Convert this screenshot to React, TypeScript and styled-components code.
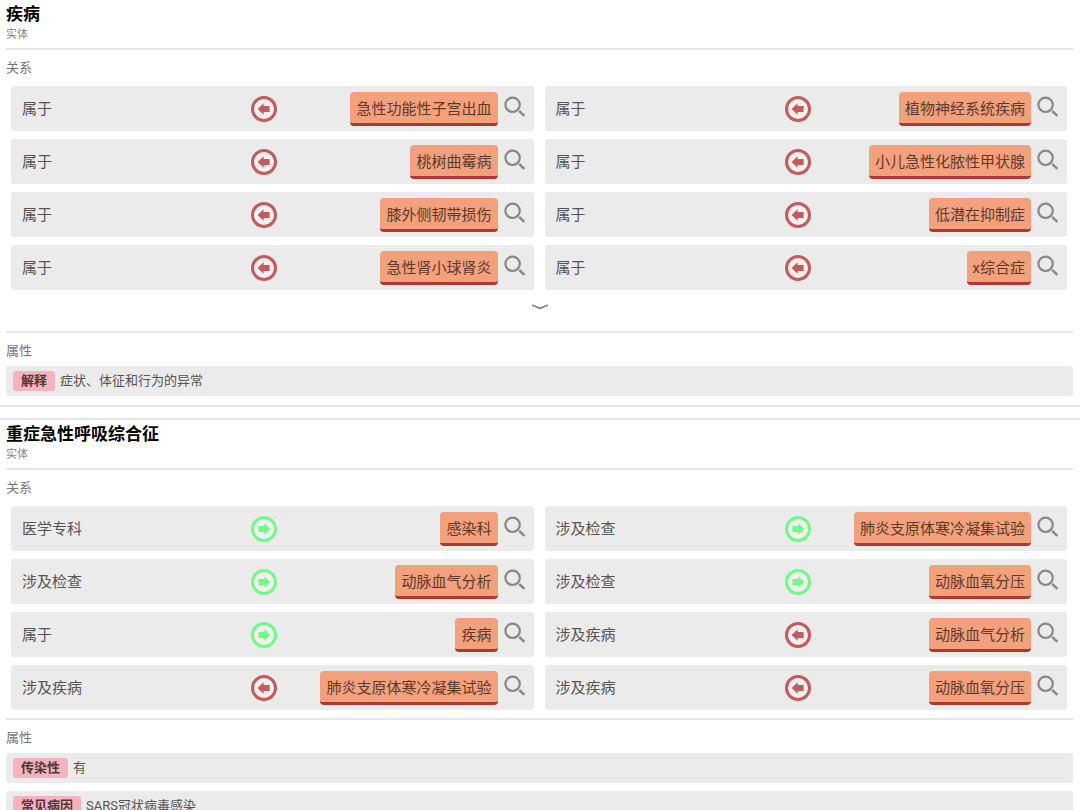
import React from "react";
import styled, { createGlobalStyle } from "styled-components";

type Direction = "in" | "out";

interface Relation {
  name: string;
  direction: Direction;
  target: string;
}

interface Attribute {
  name: string;
  value: string;
}

interface Entity {
  title: string;
  relations: Relation[];
  hasMore: boolean;
  attributes: Attribute[];
}

const entities: Entity[] = [
  {
    title: "疾病",
    hasMore: true,
    relations: [
      { name: "属于", direction: "in", target: "急性功能性子宫出血" },
      { name: "属于", direction: "in", target: "植物神经系统疾病" },
      { name: "属于", direction: "in", target: "桃树曲霉病" },
      { name: "属于", direction: "in", target: "小儿急性化脓性甲状腺" },
      { name: "属于", direction: "in", target: "膝外侧韧带损伤" },
      { name: "属于", direction: "in", target: "低潜在抑制症" },
      { name: "属于", direction: "in", target: "急性肾小球肾炎" },
      { name: "属于", direction: "in", target: "x综合症" },
    ],
    attributes: [{ name: "解释", value: "症状、体征和行为的异常" }],
  },
  {
    title: "重症急性呼吸综合征",
    hasMore: false,
    relations: [
      { name: "医学专科", direction: "out", target: "感染科" },
      { name: "涉及检查", direction: "out", target: "肺炎支原体寒冷凝集试验" },
      { name: "涉及检查", direction: "out", target: "动脉血气分析" },
      { name: "涉及检查", direction: "out", target: "动脉血氧分压" },
      { name: "属于", direction: "out", target: "疾病" },
      { name: "涉及疾病", direction: "in", target: "动脉血气分析" },
      { name: "涉及疾病", direction: "in", target: "肺炎支原体寒冷凝集试验" },
      { name: "涉及疾病", direction: "in", target: "动脉血氧分压" },
    ],
    attributes: [
      { name: "传染性", value: "有" },
      { name: "常见病因", value: "SARS冠状病毒感染" },
    ],
  },
];

const GlobalStyle = createGlobalStyle`
  *, *::before, *::after {
    box-sizing: border-box;
  }
  body {
    margin: 0;
    background: #fff;
    color: #555;
    font-family: Roboto, "Noto Sans CJK SC", sans-serif;
  }
`;

const Page = styled.main`
  display: flex;
  flex-direction: column;
  gap: 11px;
`;

const Card = styled.article`
  padding: 0 7px 9px 6px;
  border-bottom: 2px solid #e6e6e6;

  & + & {
    border-top: 2px solid #e6e6e6;
  }
`;

const CardHeader = styled.header`
  padding: 2px 0 5px;
  border-bottom: 2px solid #e6e6e6;
`;

const Title = styled.h2`
  margin: 0;
  font-size: 17px;
  line-height: 24px;
  font-weight: 700;
  color: #000;
`;

const Kind = styled.p`
  margin: 1px 0 0;
  font-size: 11px;
  line-height: 16px;
  color: #888;
`;

const SectionTitle = styled.h3`
  margin: 0;
  padding: 8px 0 5px;
  font-size: 13px;
  line-height: 20px;
  font-weight: 400;
  color: #777;
`;

const RelationGrid = styled.ul`
  display: grid;
  grid-template-columns: repeat(2, minmax(0, 1fr));
  gap: 8px 11px;
  margin: 0;
  padding: 3px 6px 8px 5px;
  list-style: none;
`;

const RelationRow = styled.li`
  display: grid;
  grid-template-columns: minmax(0, 12fr) 26px minmax(0, 13fr);
  align-items: center;
  height: 45px;
  padding: 0 8px 0 11px;
  border-radius: 3px;
  background: #ebebeb;
`;

const RelationName = styled.span`
  font-size: 15px;
  line-height: 22px;
  color: #555;
`;

const Target = styled.div`
  display: flex;
  align-items: center;
  justify-content: flex-end;
  gap: 6px;
`;

const EntityLink = styled.a`
  height: 34px;
  padding: 3px 6px 0;
  border-bottom: 3px solid #ab3a35;
  border-radius: 4px;
  background: #f3a07c;
  color: #5e3a2c;
  font-size: 15px;
  line-height: 28px;
  white-space: nowrap;
  text-decoration: none;
`;

const IconButton = styled.button`
  display: flex;
  padding: 0;
  border: 0;
  background: none;
  color: #888;
  cursor: pointer;
`;

const SearchButton = styled(IconButton)`
  padding-bottom: 4px;
`;

const MoreButton = styled(IconButton)`
  justify-content: center;
  width: 100%;
  padding: 6px 0 21px;
`;

const AttributeSection = styled.section`
  border-top: 2px solid #e6e6e6;
`;

const AttributeList = styled.dl`
  display: flex;
  flex-direction: column;
  gap: 8px;
  margin: 0;
`;

const AttributeRow = styled.div`
  display: flex;
  align-items: center;
  gap: 5px;
  height: 30px;
  padding: 0 7px;
  border-radius: 3px;
  background: #ebebeb;
  font-size: 13px;
  line-height: 20px;
`;

const AttributeName = styled.dt`
  padding: 0 8px;
  border-radius: 3px;
  background: #f4b4be;
  color: #54343a;
  font-weight: 700;
`;

const AttributeValue = styled.dd`
  margin: 0;
  color: #555;
`;

function DirectionIcon({ direction }: { direction: Direction }) {
  const incoming = direction === "in";
  const color = incoming ? "#c25b5b" : "#70fa88";
  return (
    <svg width="26" height="26" viewBox="0 0 26 26" role="img" aria-label={incoming ? "指向本实体" : "指向目标"}>
      <circle cx="13" cy="13" r="11.5" fill="#f4efef" stroke={color} strokeWidth="3" />
      <path
        d="M6.6 13 L12.6 7.2 V9.9 H18.6 V16.1 H12.6 V18.8 Z"
        fill={color}
        transform={incoming ? undefined : "rotate(180 13 13)"}
      />
    </svg>
  );
}

function SearchIcon() {
  return (
    <svg width="22" height="22" viewBox="0 0 22 22" fill="none" stroke="currentColor" aria-hidden="true">
      <circle cx="8.6" cy="8.8" r="7.2" strokeWidth="2.2" />
      <path d="M15.2 15 L20.4 19.8" strokeWidth="2.4" />
    </svg>
  );
}

function ChevronIcon() {
  return (
    <svg width="18" height="6" viewBox="0 0 18 6" fill="none" stroke="currentColor" aria-hidden="true">
      <path d="M1 1 L9 4.4 L17 1" strokeWidth="1.8" />
    </svg>
  );
}

function EntityCard({ entity }: { entity: Entity }) {
  return (
    <Card>
      <CardHeader>
        <Title>{entity.title}</Title>
        <Kind>实体</Kind>
      </CardHeader>
      <section>
        <SectionTitle>关系</SectionTitle>
        <RelationGrid>
          {entity.relations.map((relation, index) => (
            <RelationRow key={index}>
              <RelationName>{relation.name}</RelationName>
              <DirectionIcon direction={relation.direction} />
              <Target>
                <EntityLink href="#">{relation.target}</EntityLink>
                <SearchButton type="button" aria-label={`搜索${relation.target}`}>
                  <SearchIcon />
                </SearchButton>
              </Target>
            </RelationRow>
          ))}
        </RelationGrid>
        {entity.hasMore && (
          <MoreButton type="button" aria-label="展开更多">
            <ChevronIcon />
          </MoreButton>
        )}
      </section>
      <AttributeSection>
        <SectionTitle>属性</SectionTitle>
        <AttributeList>
          {entity.attributes.map((attribute) => (
            <AttributeRow key={attribute.name}>
              <AttributeName>{attribute.name}</AttributeName>
              <AttributeValue>{attribute.value}</AttributeValue>
            </AttributeRow>
          ))}
        </AttributeList>
      </AttributeSection>
    </Card>
  );
}

export default function App() {
  return (
    <>
      <GlobalStyle />
      <Page>
        {entities.map((entity) => (
          <EntityCard key={entity.title} entity={entity} />
        ))}
      </Page>
    </>
  );
}
